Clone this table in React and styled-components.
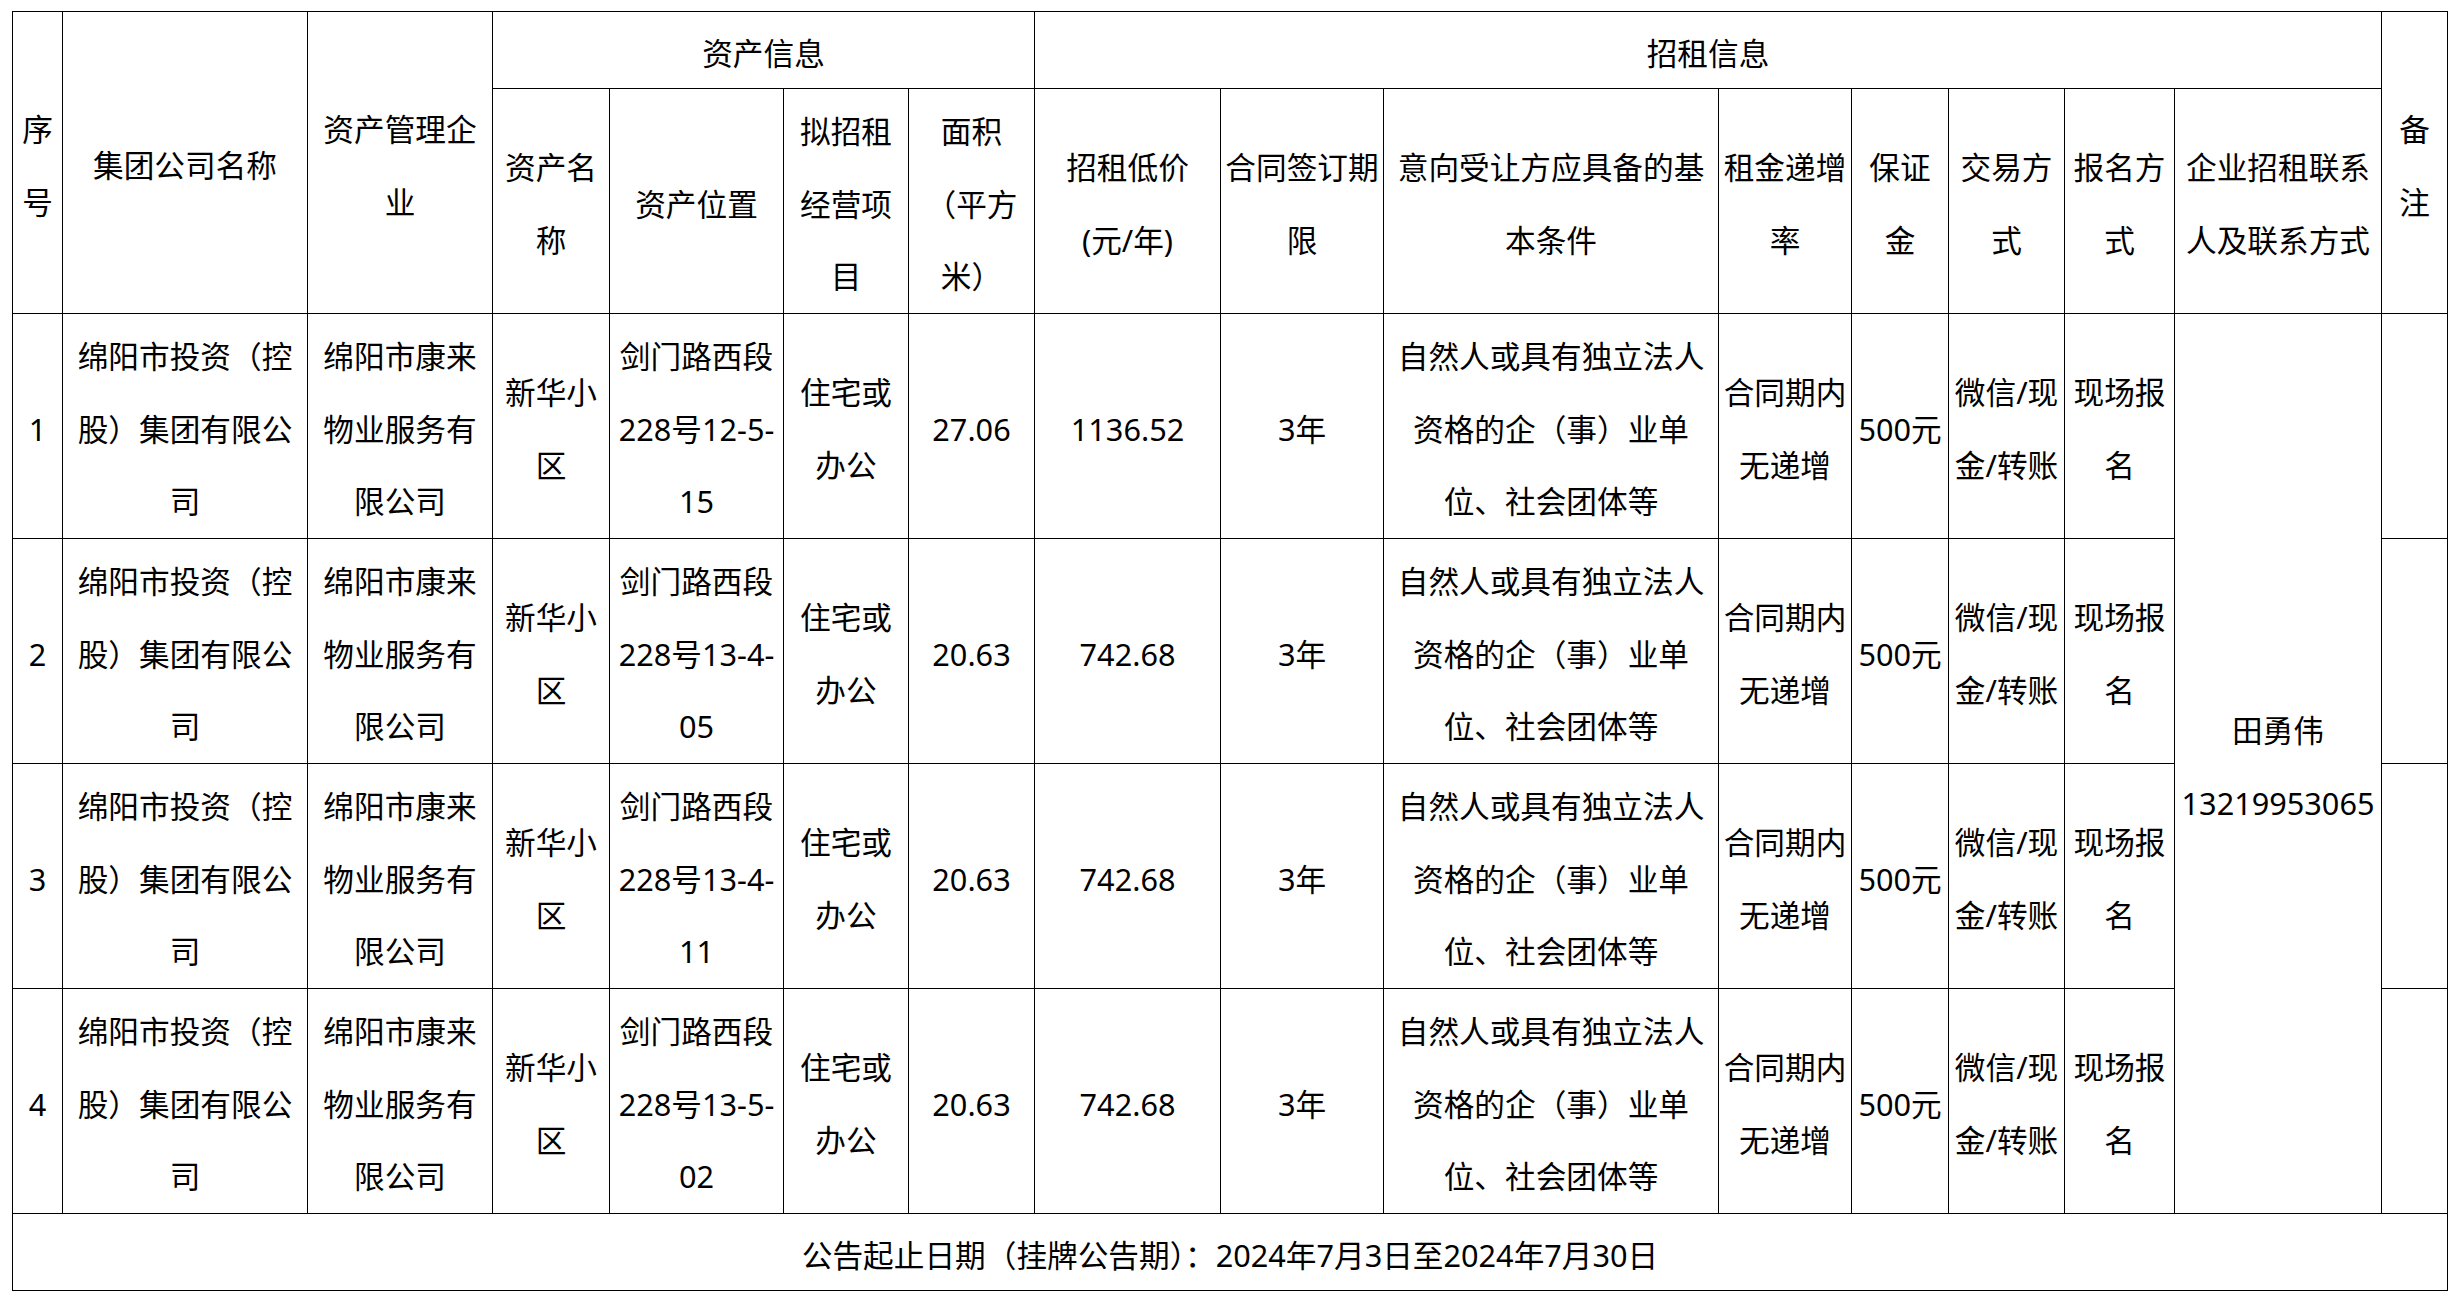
import React from "react";
import styled, { createGlobalStyle } from "styled-components";

const GlobalStyle = createGlobalStyle`
  html, body {
    margin: 0;
    padding: 0;
    background: #ffffff;
  }
  body {
    font-family: "Noto Sans", "Noto Sans CJK SC", sans-serif;
    color: #000;
  }
`;

const Page = styled.div`
  padding: 11px 0 0 12px;
`;

const Table = styled.table`
  border-collapse: collapse;
  table-layout: fixed;
  width: 2435px;
  font-family: "Noto Sans", "Noto Sans CJK SC", sans-serif;
  font-size: 30.67px;
  color: #000;
`;

const Row = styled.tr`
  height: ${(p) => p.$h}px;
`;

const cellBase = (p) => `
  border: 1px solid #000;
  padding: 6px 0 0;
  text-align: center;
  vertical-align: middle;
  font-weight: 400;
  white-space: nowrap;
  overflow: hidden;
  line-height: ${p.$single ? "46px" : "72.6px"};
`;

const HeadCell = styled.th`
  ${cellBase}
`;

const Cell = styled.td`
  ${cellBase}
`;

const Line = styled.span`
  display: block;
`;

const Lines = ({ text }) =>
  text.split("|").map((t, i) => <Line key={i}>{t}</Line>);

const widths = [50, 245, 185, 117, 174, 125, 126, 186, 163, 335, 133, 97, 116, 110, 207, 66];

const rows = [
  { no: "1", loc: "剑门路西段|228号12-5-|15", area: "27.06", price: "1136.52" },
  { no: "2", loc: "剑门路西段|228号13-4-|05", area: "20.63", price: "742.68" },
  { no: "3", loc: "剑门路西段|228号13-4-|11", area: "20.63", price: "742.68" },
  { no: "4", loc: "剑门路西段|228号13-5-|02", area: "20.63", price: "742.68" },
];

export default function App() {
  return (
    <>
      <GlobalStyle />
      <Page>
        <Table>
          <colgroup>
            {widths.map((w, i) => (
              <col key={i} style={{ width: w }} />
            ))}
          </colgroup>
          <thead>
            <Row $h={77}>
              <HeadCell rowSpan={2}><Lines text="序|号" /></HeadCell>
              <HeadCell rowSpan={2}><Lines text="集团公司名称" /></HeadCell>
              <HeadCell rowSpan={2}><Lines text="资产管理企|业" /></HeadCell>
              <HeadCell colSpan={4} $single>资产信息</HeadCell>
              <HeadCell colSpan={8} $single>招租信息</HeadCell>
              <HeadCell rowSpan={2}><Lines text="备|注" /></HeadCell>
            </Row>
            <Row $h={225}>
              <HeadCell><Lines text="资产名|称" /></HeadCell>
              <HeadCell><Lines text="资产位置" /></HeadCell>
              <HeadCell><Lines text="拟招租|经营项|目" /></HeadCell>
              <HeadCell><Lines text="面积|（平方|米）" /></HeadCell>
              <HeadCell><Lines text="招租低价|(元/年)" /></HeadCell>
              <HeadCell><Lines text="合同签订期|限" /></HeadCell>
              <HeadCell><Lines text="意向受让方应具备的基|本条件" /></HeadCell>
              <HeadCell><Lines text="租金递增|率" /></HeadCell>
              <HeadCell><Lines text="保证|金" /></HeadCell>
              <HeadCell><Lines text="交易方|式" /></HeadCell>
              <HeadCell><Lines text="报名方|式" /></HeadCell>
              <HeadCell><Lines text="企业招租联系|人及联系方式" /></HeadCell>
            </Row>
          </thead>
          <tbody>
            {rows.map((r, i) => (
              <Row $h={225} key={r.no}>
                <Cell>{r.no}</Cell>
                <Cell><Lines text="绵阳市投资（控|股）集团有限公|司" /></Cell>
                <Cell><Lines text="绵阳市康来|物业服务有|限公司" /></Cell>
                <Cell><Lines text="新华小|区" /></Cell>
                <Cell><Lines text={r.loc} /></Cell>
                <Cell><Lines text="住宅或|办公" /></Cell>
                <Cell>{r.area}</Cell>
                <Cell>{r.price}</Cell>
                <Cell>3年</Cell>
                <Cell><Lines text="自然人或具有独立法人|资格的企（事）业单|位、社会团体等" /></Cell>
                <Cell><Lines text="合同期内|无递增" /></Cell>
                <Cell>500元</Cell>
                <Cell><Lines text="微信/现|金/转账" /></Cell>
                <Cell><Lines text="现场报|名" /></Cell>
                {i === 0 && (
                  <Cell rowSpan={4}><Lines text="田勇伟|13219953065" /></Cell>
                )}
                <Cell />
              </Row>
            ))}
            <Row $h={77}>
              <Cell colSpan={16} $single>公告起止日期（挂牌公告期）：2024年7月3日至2024年7月30日</Cell>
            </Row>
          </tbody>
        </Table>
      </Page>
    </>
  );
}
